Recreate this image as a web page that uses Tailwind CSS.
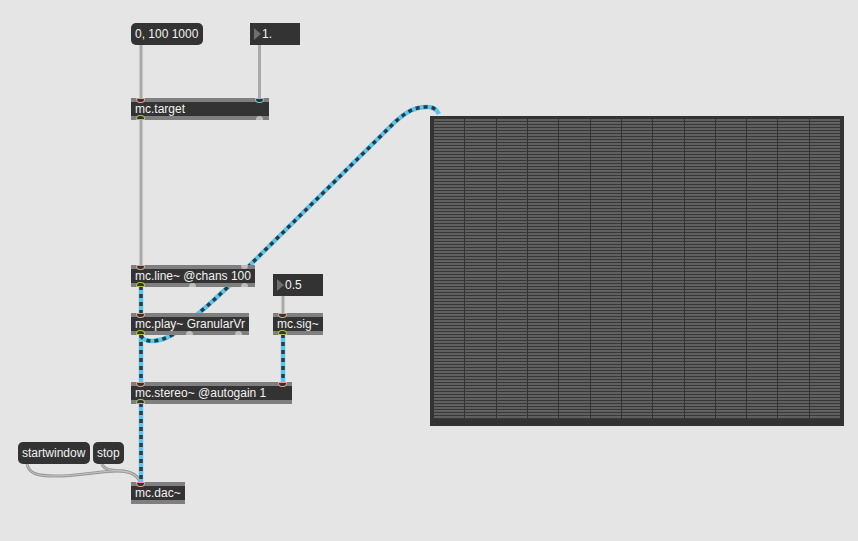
<!DOCTYPE html>
<html lang="en">
<head>
<meta charset="UTF-8">
<title>mc patch</title>
<script src="https://cdn.jsdelivr.net/npm/@tailwindcss/browser@4"></script>
</head>
<body class="bg-[#e5e5e5] overflow-hidden">
<div class="relative w-[858px] h-[541px] font-['Liberation_Sans',Arial,sans-serif] text-[12px] text-[#f2f2f2]">

  <!-- patch cords -->
  <svg class="absolute left-0 top-0" width="858" height="541" fill="none">
    <g stroke="#a9a9a9" stroke-width="3">
      <path d="M141 45V99"/>
      <path d="M259.500 45V99"/>
      <path d="M141 119V266"/>
      <path d="M283 296V314"/>
    </g>
    <g stroke="#9a9a9a" stroke-width="3">
      <path d="M27 464C29 474 38 476 55 476C80 476 105 470 122 471C133 472 139 477 141 484"/>
      <path d="M102 464C104 470 112 470 122 471C133 472 139 477 141 484"/>
    </g>
    <g stroke="#c4c4c4" stroke-width="1">
      <path d="M27 464C29 474 38 476 55 476C80 476 105 470 122 471C133 472 139 477 141 484"/>
      <path d="M102 464C104 470 112 470 122 471C133 472 139 477 141 484"/>
    </g>
    <g stroke="#58c6ef" stroke-width="4.500">
      <path d="M141 286V314"/>
      <path d="M141 334V383"/>
      <path d="M283 334V383"/>
      <path d="M141 403V483"/>
      <path d="M141 335C143 343 158 343 172 335C182 329 190 321 200 312C210 304 218 296 228 287L250 265L395 122C405 113 415 106 428 107C433 107 437 110 439 114"/>
    </g>
    <g stroke="#2e3a40" stroke-width="3.500" stroke-dasharray="4 4">
      <path d="M141 286V314"/>
      <path d="M141 334V383"/>
      <path d="M283 334V383"/>
      <path d="M141 403V483"/>
      <path d="M141 335C143 343 158 343 172 335C182 329 190 321 200 312C210 304 218 296 228 287L250 265L395 122C405 113 415 106 428 107C431 107 434 108 436 110"/>
    </g>
  </svg>

  <!-- message boxes -->
  <div class="absolute left-[131px] top-[23px] w-[72px] h-[22px] rounded-[5px] bg-[#333333] pl-[4px] leading-[23px]">0, 100 1000</div>
  <div class="absolute left-[18px] top-[442px] w-[72px] h-[22px] rounded-[5px] bg-[#333333] pl-[4px] leading-[23px]">startwindow</div>
  <div class="absolute left-[93px] top-[442px] w-[31px] h-[22px] rounded-[5px] bg-[#333333] pl-[4px] leading-[23px]">stop</div>

  <!-- number boxes -->
  <div class="absolute left-[250px] top-[23px] w-[50px] h-[22px] bg-[#333333] flex items-center gap-[1px] pl-[4px]">
    <span class="w-0 h-0 border-y-[6px] border-y-transparent border-l-[7px] border-l-[#6e6e6e]"></span>
    <span class="leading-[23px]">1.</span>
  </div>
  <div class="absolute left-[273px] top-[274px] w-[50px] h-[22px] bg-[#333333] flex items-center gap-[1px] pl-[4px]">
    <span class="w-0 h-0 border-y-[6px] border-y-transparent border-l-[7px] border-l-[#6e6e6e]"></span>
    <span class="leading-[23px]">0.5</span>
  </div>

  <!-- objects -->
  <div class="absolute left-[131px] top-[98px] w-[138px] h-[22px] bg-[#333333] border-y-[4px] border-[#7f7f7f] pl-[4px] leading-[14px]">mc.target
    <i class="absolute left-[6px] -top-[3px] w-[7px] h-[3px] rounded-b-full bg-[#333333] ring-1 ring-[#e0a090]"></i>
    <i class="absolute left-[125px] -top-[3px] w-[7px] h-[3px] rounded-b-full bg-[#333333] ring-1 ring-[#7cc4d4]"></i>
    <i class="absolute left-[6px] -bottom-[3px] w-[7px] h-[3px] rounded-t-full bg-[#333333] ring-1 ring-[#b5bd55]"></i>
    <i class="absolute left-[125px] -bottom-[4px] w-[7px] h-[4px] rounded-t-full bg-[#bdbdbd]"></i>
  </div>

  <div class="absolute left-[131px] top-[265px] w-[124px] h-[22px] bg-[#333333] border-y-[4px] border-[#7f7f7f] pl-[4px] leading-[14px]">mc.line~ @chans 100
    <i class="absolute left-[6px] -top-[3px] w-[7px] h-[3px] rounded-b-full bg-[#333333] ring-1 ring-[#e0a090]"></i>
    <i class="absolute left-[110px] -top-[4px] w-[7px] h-[4px] rounded-b-full bg-[#bdbdbd]"></i>
    <i class="absolute left-[6px] -bottom-[3px] w-[7px] h-[3px] rounded-t-full bg-[#333333] ring-1 ring-[#b5bd55]"></i>
    <i class="absolute left-[58px] -bottom-[4px] w-[7px] h-[4px] rounded-t-full bg-[#bdbdbd]"></i>
    <i class="absolute left-[110px] -bottom-[4px] w-[7px] h-[4px] rounded-t-full bg-[#bdbdbd]"></i>
  </div>

  <div class="absolute left-[131px] top-[313px] w-[118px] h-[22px] bg-[#333333] border-y-[4px] border-[#7f7f7f] pl-[4px] leading-[14px]">mc.play~ GranularVr
    <i class="absolute left-[6px] -top-[3px] w-[7px] h-[3px] rounded-b-full bg-[#333333] ring-1 ring-[#e0a090]"></i>
    <i class="absolute left-[6px] -bottom-[3px] w-[7px] h-[3px] rounded-t-full bg-[#333333] ring-1 ring-[#b5bd55]"></i>
    <i class="absolute left-[55px] -bottom-[4px] w-[7px] h-[4px] rounded-t-full bg-[#bdbdbd]"></i>
    <i class="absolute left-[104px] -bottom-[4px] w-[7px] h-[4px] rounded-t-full bg-[#bdbdbd]"></i>
  </div>

  <div class="absolute left-[273px] top-[313px] w-[50px] h-[22px] bg-[#333333] border-y-[4px] border-[#7f7f7f] pl-[4px] leading-[14px]">mc.sig~
    <i class="absolute left-[6px] -top-[3px] w-[7px] h-[3px] rounded-b-full bg-[#333333] ring-1 ring-[#e0a090]"></i>
    <i class="absolute left-[6px] -bottom-[3px] w-[7px] h-[3px] rounded-t-full bg-[#333333] ring-1 ring-[#b5bd55]"></i>
  </div>

  <div class="absolute left-[131px] top-[382px] w-[161px] h-[22px] bg-[#333333] border-y-[4px] border-[#7f7f7f] pl-[4px] leading-[14px]">mc.stereo~ @autogain 1
    <i class="absolute left-[6px] -top-[3px] w-[7px] h-[3px] rounded-b-full bg-[#333333] ring-1 ring-[#e0a090]"></i>
    <i class="absolute left-[148px] -top-[3px] w-[7px] h-[3px] rounded-b-full bg-[#333333] ring-1 ring-[#e0a090]"></i>
    <i class="absolute left-[6px] -bottom-[3px] w-[7px] h-[3px] rounded-t-full bg-[#333333] ring-1 ring-[#b5bd55]"></i>
  </div>

  <div class="absolute left-[131px] top-[482px] w-[54px] h-[22px] bg-[#333333] border-y-[4px] border-[#7f7f7f] pl-[4px] leading-[14px]">mc.dac~
    <i class="absolute left-[6px] -top-[3px] w-[7px] h-[3px] rounded-b-full bg-[#333333] ring-1 ring-[#e0a090]"></i>
  </div>

  <!-- matrix of 13 columns, 100 rows -->
  <div class="absolute left-[430px] top-[116px] w-[414px] h-[310px] bg-[#333333] pl-[4px] pr-[4px] pt-[3px] pb-[7px] flex gap-px">
    <div class="flex-1 bg-[repeating-linear-gradient(to_bottom,#606060_0,#606060_2px,#383838_2px,#383838_3px)]"></div>
    <div class="flex-1 bg-[repeating-linear-gradient(to_bottom,#606060_0,#606060_2px,#383838_2px,#383838_3px)]"></div>
    <div class="flex-1 bg-[repeating-linear-gradient(to_bottom,#606060_0,#606060_2px,#383838_2px,#383838_3px)]"></div>
    <div class="flex-1 bg-[repeating-linear-gradient(to_bottom,#606060_0,#606060_2px,#383838_2px,#383838_3px)]"></div>
    <div class="flex-1 bg-[repeating-linear-gradient(to_bottom,#606060_0,#606060_2px,#383838_2px,#383838_3px)]"></div>
    <div class="flex-1 bg-[repeating-linear-gradient(to_bottom,#606060_0,#606060_2px,#383838_2px,#383838_3px)]"></div>
    <div class="flex-1 bg-[repeating-linear-gradient(to_bottom,#606060_0,#606060_2px,#383838_2px,#383838_3px)]"></div>
    <div class="flex-1 bg-[repeating-linear-gradient(to_bottom,#606060_0,#606060_2px,#383838_2px,#383838_3px)]"></div>
    <div class="flex-1 bg-[repeating-linear-gradient(to_bottom,#606060_0,#606060_2px,#383838_2px,#383838_3px)]"></div>
    <div class="flex-1 bg-[repeating-linear-gradient(to_bottom,#606060_0,#606060_2px,#383838_2px,#383838_3px)]"></div>
    <div class="flex-1 bg-[repeating-linear-gradient(to_bottom,#606060_0,#606060_2px,#383838_2px,#383838_3px)]"></div>
    <div class="flex-1 bg-[repeating-linear-gradient(to_bottom,#606060_0,#606060_2px,#383838_2px,#383838_3px)]"></div>
    <div class="flex-1 bg-[repeating-linear-gradient(to_bottom,#606060_0,#606060_2px,#383838_2px,#383838_3px)]"></div>
  </div>
</div>
</body>
</html>
